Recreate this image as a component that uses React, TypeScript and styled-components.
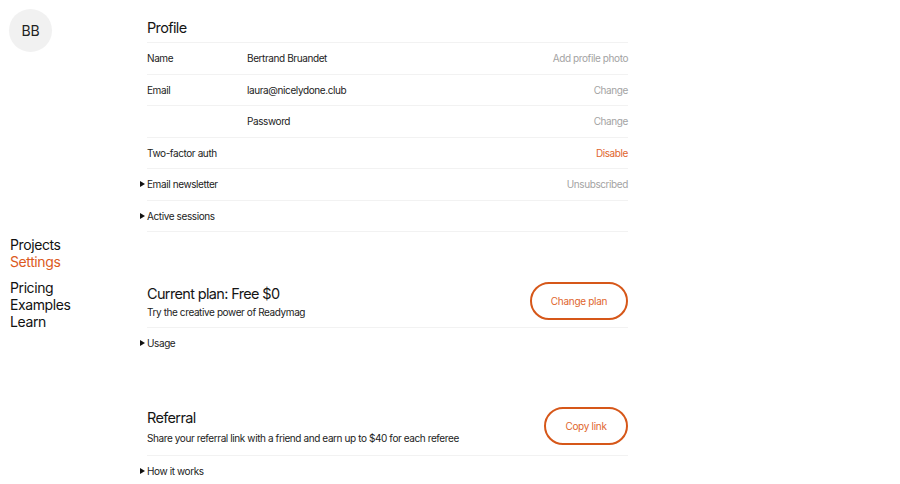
import React from "react";
import styled, { createGlobalStyle } from "styled-components";

const ORANGE = "#dc5a1e";

const Global = createGlobalStyle`
  html, body { margin: 0; padding: 0; background: #fff; }
  body { font-family: Inter, "Liberation Sans", Arial, sans-serif; color: #1a1a1a; -webkit-font-smoothing: antialiased; }
`;

const Page = styled.div`
  display: grid;
  grid-template-columns: 147px 481px;
  width: 900px;
  height: 484px;
  overflow: hidden;
`;

const Sidebar = styled.aside`
  display: flex;
  flex-direction: column;
  padding: 9px 0 0 9px;
`;

const Avatar = styled.div`
  width: 43px;
  height: 43px;
  border-radius: 50%;
  background: #f1f1f1;
  display: flex;
  align-items: center;
  justify-content: center;
  font-size: 14px;
  font-weight: 400;
  letter-spacing: -0.2px;
  color: #222;
`;

const Nav = styled.nav`
  display: flex;
  flex-direction: column;
  margin-top: 184px;
  padding-left: 1px;
`;

const NavGroup = styled.div`
  display: flex;
  flex-direction: column;
  & + & { margin-top: 9px; }
`;

const NavLink = styled.a<{ $active?: boolean }>`
  font-size: 14px;
  line-height: 17px;
  letter-spacing: -0.4px;
  color: ${(p) => (p.$active ? ORANGE : "#111")};
  text-decoration: none;
`;

const Main = styled.main`
  display: flex;
  flex-direction: column;
`;

const Section = styled.section<{ $top: number }>`
  display: flex;
  flex-direction: column;
  margin-top: ${(p) => p.$top}px;
`;

const Title = styled.h2`
  margin: 0;
  font-size: 14.5px;
  font-weight: 400;
  line-height: 20px;
  letter-spacing: -0.65px;
  color: #151515;
`;

const ProfileHead = styled.div`
  height: 43px;
  display: flex;
  align-items: flex-end;
  padding-bottom: 4px;
  box-sizing: border-box;
  border-bottom: 1px solid #f2f2f2;
`;

const Row = styled.div`
  height: 31.5px;
  box-sizing: border-box;
  display: grid;
  grid-template-columns: 100px 1fr auto;
  align-items: center;
  border-bottom: 1px solid #f2f2f2;
  font-size: 10px;
  letter-spacing: -0.4px;
  color: #222;
`;

const Action = styled.span<{ $accent?: boolean }>`
  color: ${(p) => (p.$accent ? "#e0652d" : "#a3a3a3")};
  text-align: right;
`;

const Toggle = styled.span`
  display: flex;
  align-items: center;
  margin-left: -7px;
  font-size: 10px;
  letter-spacing: -0.4px;
  color: #222;
  white-space: nowrap;
  &::before {
    content: "";
    width: 0;
    height: 0;
    border-top: 3.5px solid transparent;
    border-bottom: 3.5px solid transparent;
    border-left: 5px solid #111;
    margin-right: 2px;
  }
`;

const PlanHead = styled.div<{ $pad: number }>`
  display: flex;
  align-items: center;
  justify-content: space-between;
  padding-bottom: ${(p) => p.$pad}px;
  border-bottom: 1px solid #f2f2f2;
`;

const PlanText = styled.div<{ $gap: number }>`
  display: flex;
  flex-direction: column;
  gap: ${(p) => p.$gap}px;
`;

const Sub = styled.p`
  margin: 0;
  font-size: 10px;
  line-height: 12px;
  letter-spacing: -0.4px;
  color: #222;
`;

const PillButton = styled.button<{ $w: number }>`
  width: ${(p) => p.$w}px;
  height: 38px;
  border-radius: 19px;
  border: 2.5px solid #d65719;
  background: #fff;
  color: #e0652d;
  font-family: inherit;
  font-size: 10px;
  letter-spacing: -0.3px;
  cursor: pointer;
`;

const Foot = styled.div`
  height: 29px;
  display: flex;
  align-items: center;
`;

export default function App() {
  return (
    <>
      <Global />
      <Page>
        <Sidebar>
          <Avatar>BB</Avatar>
          <Nav>
            <NavGroup>
              <NavLink>Projects</NavLink>
              <NavLink $active>Settings</NavLink>
            </NavGroup>
            <NavGroup>
              <NavLink>Pricing</NavLink>
              <NavLink>Examples</NavLink>
              <NavLink>Learn</NavLink>
            </NavGroup>
          </Nav>
        </Sidebar>
        <Main>
          <Section $top={0}>
            <ProfileHead>
              <Title>Profile</Title>
            </ProfileHead>
            <Row>
              <span>Name</span>
              <span>Bertrand Bruandet</span>
              <Action>Add profile photo</Action>
            </Row>
            <Row>
              <span>Email</span>
              <span>laura@nicelydone.club</span>
              <Action>Change</Action>
            </Row>
            <Row>
              <span></span>
              <span>Password</span>
              <Action>Change</Action>
            </Row>
            <Row>
              <span>Two-factor auth</span>
              <span></span>
              <Action $accent>Disable</Action>
            </Row>
            <Row>
              <Toggle>Email newsletter</Toggle>
              <span></span>
              <Action>Unsubscribed</Action>
            </Row>
            <Row>
              <Toggle>Active sessions</Toggle>
              <span></span>
              <span></span>
            </Row>
          </Section>
          <Section $top={50}>
            <PlanHead $pad={7}>
              <PlanText $gap={2}>
                <Title>Current plan: Free $0</Title>
                <Sub>Try the creative power of Readymag</Sub>
              </PlanText>
              <PillButton $w={98}>Change plan</PillButton>
            </PlanHead>
            <Foot>
              <Toggle>Usage</Toggle>
            </Foot>
          </Section>
          <Section $top={50}>
            <PlanHead $pad={10}>
              <PlanText $gap={4}>
                <Title>Referral</Title>
                <Sub>Share your referral link with a friend and earn up to $40 for each referee</Sub>
              </PlanText>
              <PillButton $w={84}>Copy link</PillButton>
            </PlanHead>
            <Foot>
              <Toggle>How it works</Toggle>
            </Foot>
          </Section>
        </Main>
      </Page>
    </>
  );
}
